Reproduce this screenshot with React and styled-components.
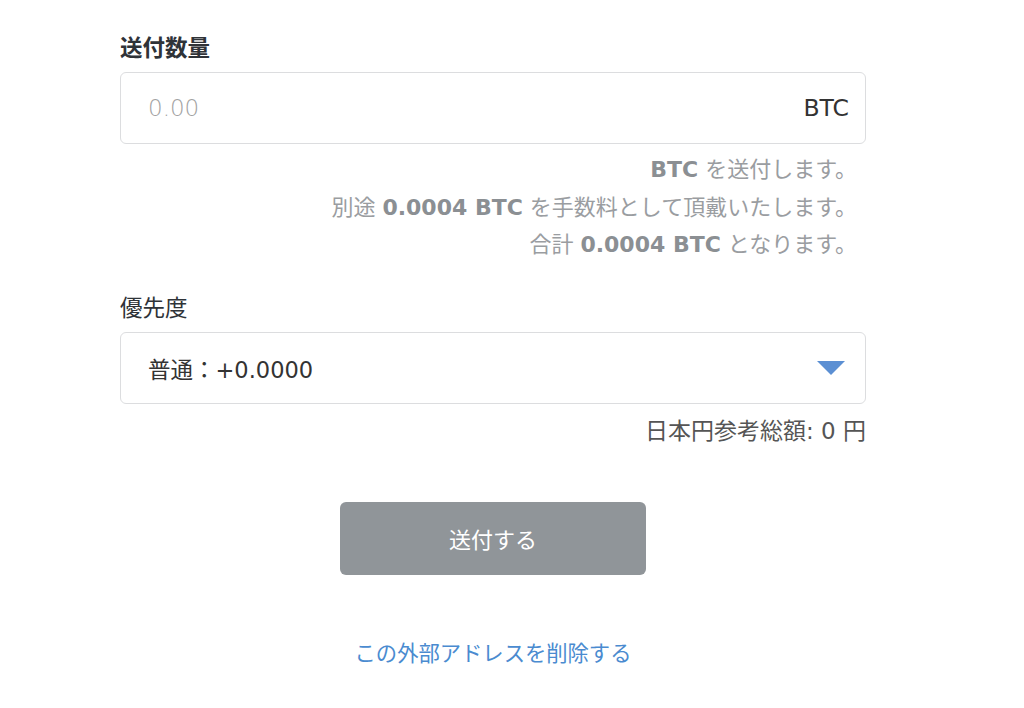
import React from "react";
import styled, { createGlobalStyle } from "styled-components";

const Global = createGlobalStyle`
  html, body { margin: 0; padding: 0; background: #fff; }
  body {
    font-family: "DejaVu Sans", "Noto Sans CJK JP", sans-serif;
    -webkit-font-smoothing: antialiased;
  }
`;

const Page = styled.div`
  width: 1024px;
  min-height: 708px;
  box-sizing: border-box;
  padding: 30px 0 0 120px;
`;

const Form = styled.div`
  width: 746px;
  display: flex;
  flex-direction: column;
`;

const Label = styled.div`
  font-size: 22.5px;
  line-height: 36px;
  color: #2f3338;
  font-weight: ${(p) => (p.$bold ? 700 : 400)};
  margin-bottom: 6px;
`;

const Box = styled.div`
  height: 72px;
  box-sizing: border-box;
  border: 1.5px solid #dcdddf;
  border-radius: 6px;
  display: flex;
  align-items: center;
  justify-content: space-between;
  padding: 0 16px 0 27px;
  background: #fff;
`;

const Placeholder = styled.span`
  font-size: 23px;
  color: #a2a2a2;
  font-weight: 200;
`;

const Unit = styled.span`
  font-size: 23.5px;
  color: #333;
`;

const Value = styled.span`
  font-size: 22.5px;
  color: #333;
`;

const Notes = styled.div`
  display: flex;
  flex-direction: column;
  align-items: flex-end;
  padding: 7px 9px 0 0;
  font-size: 22px;
  line-height: 37.5px;
  color: #9a9da1;
`;

const Strong = styled.b`
  font-weight: 700;
  color: #8b8f93;
`;

const Field = styled.div`
  margin-top: ${(p) => p.$top || 0}px;
  display: flex;
  flex-direction: column;
`;

const Arrow = styled.svg`
  width: 28px;
  height: 14px;
  margin-right: 4px;
`;

const Total = styled.div`
  text-align: right;
  font-size: 23px;
  line-height: 30px;
  color: #555;
  margin-top: 12px;
`;

const ButtonRow = styled.div`
  display: flex;
  justify-content: center;
  margin-top: 56px;
`;

const Button = styled.button`
  width: 306px;
  height: 73px;
  border: none;
  border-radius: 6px;
  background: #909599;
  color: #fff;
  font-family: inherit;
  font-size: 22px;
`;

const LinkRow = styled.div`
  text-align: center;
  line-height: 30px;
  margin-top: 64px;
`;

const Link = styled.a`
  font-size: 21.3px;
  color: #4a8bd0;
  text-decoration: none;
`;

export default function App() {
  return (
    <>
      <Global />
      <Page>
        <Form>
          <Field>
            <Label $bold>送付数量</Label>
            <Box>
              <Placeholder>0.00</Placeholder>
              <Unit>BTC</Unit>
            </Box>
            <Notes>
              <div>
                <Strong>BTC</Strong> を送付します。
              </div>
              <div>
                別途 <Strong>0.0004 BTC</Strong> を手数料として頂戴いたします。
              </div>
              <div>
                合計 <Strong>0.0004 BTC</Strong> となります。
              </div>
            </Notes>
          </Field>
          <Field $top={26}>
            <Label>優先度</Label>
            <Box>
              <Value>普通：+0.0000</Value>
              <Arrow viewBox="0 0 28 14">
                <polygon points="0,0 28,0 14,14" fill="#5b8fd3" />
              </Arrow>
            </Box>
            <Total>日本円参考総額: 0 円</Total>
          </Field>
          <ButtonRow>
            <Button>送付する</Button>
          </ButtonRow>
          <LinkRow>
            <Link href="#">この外部アドレスを削除する</Link>
          </LinkRow>
        </Form>
      </Page>
    </>
  );
}
